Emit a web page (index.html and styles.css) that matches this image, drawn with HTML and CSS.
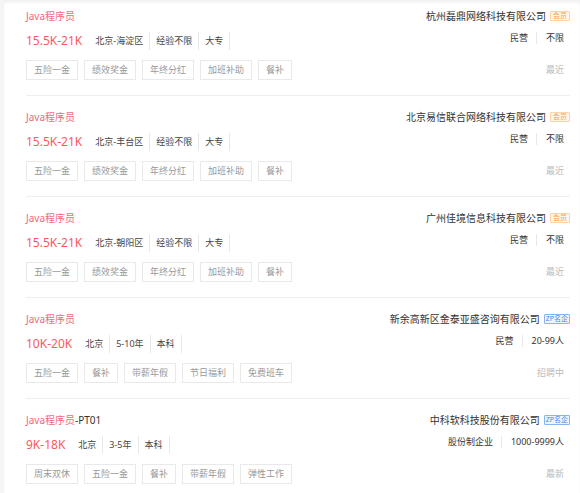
FILE: index.html
```html
<!DOCTYPE html>
<html lang="zh">
<head>
<meta charset="utf-8">
<title>职位列表</title>
<link rel="stylesheet" href="styles.css">
</head>
<body>
<div class="page">
  <div class="list">
    <div class="card">
      <div class="title"><span class="kw">Java程序员</span></div>
      <div class="company">杭州磊鼎网络科技有限公司<span class="badge vip">会员</span></div>
      <div class="meta"><span class="salary">15.5K-21K</span><span class="item">北京-海淀区</span><span class="item">经验不限</span><span class="item">大专</span></div>
      <div class="cinfo"><span class="ci">民营</span><span class="ci">不限</span></div>
      <div class="tags"><span class="tag">五险一金</span><span class="tag">绩效奖金</span><span class="tag">年终分红</span><span class="tag">加班补助</span><span class="tag">餐补</span></div>
      <div class="status">最近</div>
    </div>
    <div class="card">
      <div class="title"><span class="kw">Java程序员</span></div>
      <div class="company">北京易信联合网络科技有限公司<span class="badge vip">会员</span></div>
      <div class="meta"><span class="salary">15.5K-21K</span><span class="item">北京-丰台区</span><span class="item">经验不限</span><span class="item">大专</span></div>
      <div class="cinfo"><span class="ci">民营</span><span class="ci">不限</span></div>
      <div class="tags"><span class="tag">五险一金</span><span class="tag">绩效奖金</span><span class="tag">年终分红</span><span class="tag">加班补助</span><span class="tag">餐补</span></div>
      <div class="status">最近</div>
    </div>
    <div class="card">
      <div class="title"><span class="kw">Java程序员</span></div>
      <div class="company">广州佳境信息科技有限公司<span class="badge vip">会员</span></div>
      <div class="meta"><span class="salary">15.5K-21K</span><span class="item">北京-朝阳区</span><span class="item">经验不限</span><span class="item">大专</span></div>
      <div class="cinfo"><span class="ci">民营</span><span class="ci">不限</span></div>
      <div class="tags"><span class="tag">五险一金</span><span class="tag">绩效奖金</span><span class="tag">年终分红</span><span class="tag">加班补助</span><span class="tag">餐补</span></div>
      <div class="status">最近</div>
    </div>
    <div class="card">
      <div class="title"><span class="kw">Java程序员</span></div>
      <div class="company">新余高新区金泰亚盛咨询有限公司<span class="badge zp">ZP名企</span></div>
      <div class="meta"><span class="salary">10K-20K</span><span class="item">北京</span><span class="item">5-10年</span><span class="item">本科</span></div>
      <div class="cinfo"><span class="ci">民营</span><span class="ci">20-99人</span></div>
      <div class="tags"><span class="tag">五险一金</span><span class="tag">餐补</span><span class="tag">带薪年假</span><span class="tag">节日福利</span><span class="tag">免费班车</span></div>
      <div class="status">招聘中</div>
    </div>
    <div class="card">
      <div class="title"><span class="kw">Java程序员</span>-PT01</div>
      <div class="company">中科软科技股份有限公司<span class="badge zp">ZP名企</span></div>
      <div class="meta"><span class="salary">9K-18K</span><span class="item">北京</span><span class="item">3-5年</span><span class="item">本科</span></div>
      <div class="cinfo"><span class="ci">股份制企业</span><span class="ci">1000-9999人</span></div>
      <div class="tags"><span class="tag">周末双休</span><span class="tag">五险一金</span><span class="tag">餐补</span><span class="tag">带薪年假</span><span class="tag">弹性工作</span></div>
      <div class="status">最新</div>
    </div>
  </div>
</div>
</body>
</html>
```
FILE: styles.css
```css
html, body {
  margin: 0;
  padding: 0;
  height: 100%;
}
body {
  background: #f4f5f7;
  font-family: "Noto Sans", "Noto Sans CJK SC", sans-serif;
  color: #333;
  overflow: hidden;
}
.page {
  margin-left: 4px;
  height: 100%;
  background: #fff;
  box-shadow: inset 0 4px 4px -2px rgba(0, 0, 0, 0.07);
}
.list {
  padding-top: 10px;
  margin: 0 10px 0 22px;
}
.card {
  display: grid;
  grid-template-columns: 1fr auto;
  grid-template-rows: 12px 18px 20px;
  row-gap: 10px;
  padding-bottom: 15px;
  border-bottom: 1px solid #eeeeee;
}
.card + .card {
  padding-top: 15px;
}
.title {
  font-size: 10px;
  line-height: 12px;
  color: #333;
  white-space: nowrap;
}
.kw {
  color: #f3687c;
}
.company {
  display: flex;
  align-items: center;
  justify-content: flex-end;
  font-size: 10px;
  line-height: 12px;
  color: #333;
  white-space: nowrap;
}
.badge {
  margin-left: 4px;
  height: 10px;
  box-sizing: border-box;
  padding: 0 2px;
  font-size: 7px;
  line-height: 8px;
  border: 1px solid;
  border-radius: 1px;
}
.badge.vip {
  color: #ffa04c;
  background: #fff6ec;
  border-color: #ffd3a8;
}
.badge.zp {
  color: #3f8be6;
  background: #eef5fe;
  border-color: #86b6ef;
  padding: 0 1px;
}
.meta {
  display: flex;
  align-items: center;
  white-space: nowrap;
}
.salary {
  font-size: 12px;
  line-height: 18px;
  color: #fb5a5a;
  margin-right: 7px;
}
.item {
  font-size: 9px;
  line-height: 18px;
  padding: 0 6px;
  border-right: 1px solid #e8e8e8;
  color: #444;
}
.cinfo {
  align-self: start;
  display: flex;
  justify-content: flex-end;
  white-space: nowrap;
}
.ci {
  font-size: 9px;
  line-height: 12px;
  padding: 0 8px 0 9px;
  color: #333;
}
.ci + .ci {
  border-left: 1px solid #e8e8e8;
}
.ci:last-child {
  padding-right: 6px;
}
.tags {
  display: flex;
  gap: 6px;
}
.tag {
  height: 20px;
  box-sizing: border-box;
  padding: 0 7px;
  border: 1px solid #e9e9e9;
  font-size: 9px;
  line-height: 18px;
  color: #999;
  white-space: nowrap;
}
.status {
  align-self: center;
  text-align: right;
  padding-right: 6px;
  font-size: 9px;
  line-height: 12px;
  color: #bbb;
}
```
